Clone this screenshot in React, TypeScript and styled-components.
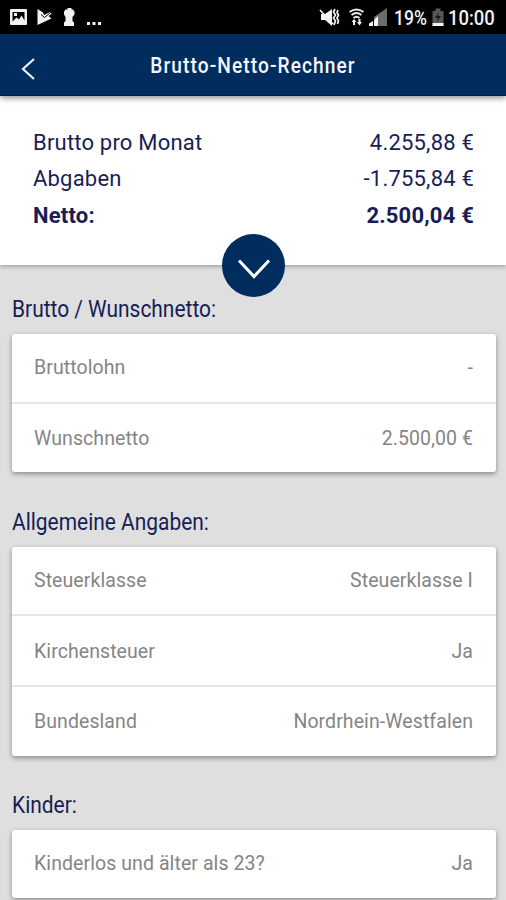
import React from "react";
import styled, { createGlobalStyle } from "styled-components";

const NAVY = "#002d5d";
const INK = "#161e55";

const GlobalStyle = createGlobalStyle`
  * { box-sizing: border-box; }
  html, body { margin: 0; padding: 0; }
  body {
    background: #dfdfdf;
    font-family: Roboto, "Liberation Sans", sans-serif;
    overflow: hidden;
  }
`;

const Screen = styled.div`
  width: 506px;
  height: 900px;
  overflow: hidden;
  display: flex;
  flex-direction: column;
  background: #dfdfdf;
`;

const StatusBar = styled.div`
  flex: none;
  height: 34px;
  background: #000;
  color: #f2f2f2;
  display: flex;
  justify-content: space-between;
  padding: 0 11px 0 9px;
`;

const StatusIcons = styled.svg`
  display: block;
  flex: none;
  height: 34px;
`;

const StatusGroup = styled.div`
  display: flex;
  align-items: center;
`;

const StatusText = styled.span<{ $width: number; $scale: number }>`
  flex: none;
  width: ${(p) => p.$width}px;
  font-size: 20.5px;
  font-weight: 500;
  line-height: 34px;
  padding-top: 2px;
  white-space: nowrap;
  transform: scaleX(${(p) => p.$scale});
  transform-origin: left center;
`;

const AppBar = styled.header`
  flex: none;
  position: relative;
  z-index: 2;
  height: 62px;
  background: ${NAVY};
  border-bottom: 1px solid #061a55;
  box-shadow: 0 2px 6px rgba(0, 0, 0, 0.45);
  display: grid;
  grid-template-columns: 56px 1fr 56px;
  align-items: center;
`;

const BackButton = styled.button`
  height: 62px;
  padding: 8px 0 0 20px;
  border: 0;
  background: none;
  display: flex;
  align-items: center;
`;

const Title = styled.h1`
  margin: 0;
  padding-top: 2px;
  color: #f4f6fa;
  font-size: 22px;
  line-height: 28px;
  font-weight: 500;
  letter-spacing: 1.25px;
  text-align: center;
  white-space: nowrap;
  transform: scaleX(0.87);
`;

const Summary = styled.section`
  flex: none;
  position: relative;
  z-index: 1;
  height: 169px;
  padding: 28.5px 32px 0 33px;
  background: #fff;
  box-shadow: 0 1px 5px rgba(0, 0, 0, 0.35);
`;

const SummaryRow = styled.div<{ $strong?: boolean }>`
  display: flex;
  justify-content: space-between;
  height: 36.5px;
  line-height: 36.5px;
  font-size: 22px;
  letter-spacing: 0.2px;
  font-weight: ${(p) => (p.$strong ? 700 : 400)};
  color: ${INK};
`;

const ExpandButton = styled.button`
  position: absolute;
  left: 222px;
  bottom: -32px;
  width: 63px;
  height: 63px;
  padding: 6px 0 0;
  border: 0;
  border-radius: 50%;
  background: ${NAVY};
  display: flex;
  align-items: center;
  justify-content: center;
`;

const Content = styled.main`
  flex: 1;
  padding: 29px 10px 0 12px;
`;

const Heading = styled.h2`
  margin: 0 0 9px;
  height: 31px;
  line-height: 31px;
  width: max-content;
  font-size: 23px;
  font-weight: 400;
  color: ${INK};
  transform: scaleX(0.91);
  transform-origin: left center;
`;

const Card = styled.div`
  margin-bottom: 34.5px;
  background: #fff;
  border-radius: 3px;
  box-shadow: 0 2px 5px rgba(0, 0, 0, 0.38);
`;

const CardRow = styled.div`
  height: 70.75px;
  padding: 1px 23px 0 22px;
  display: flex;
  align-items: center;
  justify-content: space-between;
  font-size: 19.5px;
  letter-spacing: 0.08px;
  color: #858585;

  &:first-child { height: 67.5px; padding-top: 0; padding-bottom: 0.5px; }
  & + & { border-top: 2px solid #e6e6e6; }
`;

const summary = [
  { label: "Brutto pro Monat", value: "4.255,88 €" },
  { label: "Abgaben", value: "-1.755,84 €" },
  { label: "Netto:", value: "2.500,04 €", strong: true },
];

const sections = [
  { title: "Brutto / Wunschnetto:", rows: [["Bruttolohn", "-"], ["Wunschnetto", "2.500,00 €"]] },
  {
    title: "Allgemeine Angaben:",
    rows: [["Steuerklasse", "Steuerklasse I"], ["Kirchensteuer", "Ja"], ["Bundesland", "Nordrhein-Westfalen"]],
  },
  { title: "Kinder:", rows: [["Kinderlos und älter als 23?", "Ja"]] },
];

function Notifications() {
  return (
    <StatusIcons width="96" viewBox="9 0 96 34" fill="#f2f2f2">
      <path fillRule="evenodd" d="M11 9h15a1 1 0 0 1 1 1v14a1 1 0 0 1-1 1H11a1 1 0 0 1-1-1V10a1 1 0 0 1 1-1zm1.500 3v9.500l4-4 2.500 2 2.500-4 3 5V12zM14 13h3v3h-3z" />
      <path d="M37.500 9 43 12.500l1 2.500 6-3 1.500 2-3 2 3 2.500L37.500 25z" />
      <path d="m41 14.500 3.500 3 6-5" fill="none" stroke="#000" strokeWidth="1" />
      <path d="M67.500 8h4v1.500h2v1.500h1v3.500L72.500 17v4l1.500 1.500V26H64v-3.500l1.500-1.500v-4l-1.500-2.500V11h1V9.500h2.500z" />
      <path d="M87 22h3v3h-3zM92.500 22h3v3h-3zM98 22h3v3h-3z" />
    </StatusIcons>
  );
}

function Connectivity() {
  return (
    <StatusIcons width="75" viewBox="318 0 75 34" fill="none">
      <path d="M320 14h4l7-5v17l-7-6h-4z" fill="#f2f2f2" />
      <path d="m319 10 13 14M334 9l-1.500 3 2 3-2 3 2 3-1.500 4M337 10l-1 2.500 1.500 2.500-1.500 3 1.500 3-1 3" stroke="#f2f2f2" strokeWidth="1.700" />
      <path d="M348.500 12q7-5 14 0M350.500 15q5-4 10 0M352.500 18q3-2.500 6 0" stroke="#e8e8e8" strokeWidth="1.900" />
      <path d="m350.500 22 2.500-3 2.500 3h-1.500V25h-2v-3zM356 22h1.500v-3h2v3h1.500l-2.500 3.500z" fill="#f2f2f2" />
      <path d="m373 17 13-9v18h-13z" fill="#6c6c6c" />
      <path d="M368 26v-2.500l4-2.500v5zM373 26v-6l4-4v10z" fill="#f2f2f2" />
    </StatusIcons>
  );
}

function Battery() {
  return (
    <StatusIcons width="19" viewBox="428 0 19 34">
      <path d="M434.500 8.500h5V11h3v15h-11V11h3z" fill="#585858" />
      <path d="m438 12-4 6h3l-1 4 4-6h-3z" fill="#161616" />
      <path d="M431.500 23h11v3h-11z" fill="#f2f2f2" />
    </StatusIcons>
  );
}

export default function App() {
  return (
    <>
      <GlobalStyle />
      <Screen>
        <StatusBar>
          <Notifications />
          <StatusGroup>
            <Connectivity />
            <StatusText $width={35} $scale={0.86}>19%</StatusText>
            <Battery />
            <StatusText $width={47} $scale={0.9}>10:00</StatusText>
          </StatusGroup>
        </StatusBar>
        <AppBar>
          <BackButton aria-label="Zurück">
            <svg width="16" height="24" viewBox="0 0 16 24" fill="none" stroke="#eef2f8" strokeWidth="2.200">
              <path d="M14 2 3 12l11 10" />
            </svg>
          </BackButton>
          <Title>Brutto-Netto-Rechner</Title>
        </AppBar>
        <Summary>
          {summary.map((r) => (
            <SummaryRow key={r.label} $strong={r.strong}>
              <span>{r.label}</span>
              <span>{r.value}</span>
            </SummaryRow>
          ))}
          <ExpandButton aria-label="Details">
            <svg width="34" height="22" viewBox="0 0 34 22" fill="none" stroke="#fff" strokeWidth="3">
              <path d="M2 2.500 17 18.500l15-16" />
            </svg>
          </ExpandButton>
        </Summary>
        <Content>
          {sections.map((s) => (
            <React.Fragment key={s.title}>
              <Heading>{s.title}</Heading>
              <Card>
                {s.rows.map(([label, value]) => (
                  <CardRow key={label}>
                    <span>{label}</span>
                    <span>{value}</span>
                  </CardRow>
                ))}
              </Card>
            </React.Fragment>
          ))}
        </Content>
      </Screen>
    </>
  );
}
